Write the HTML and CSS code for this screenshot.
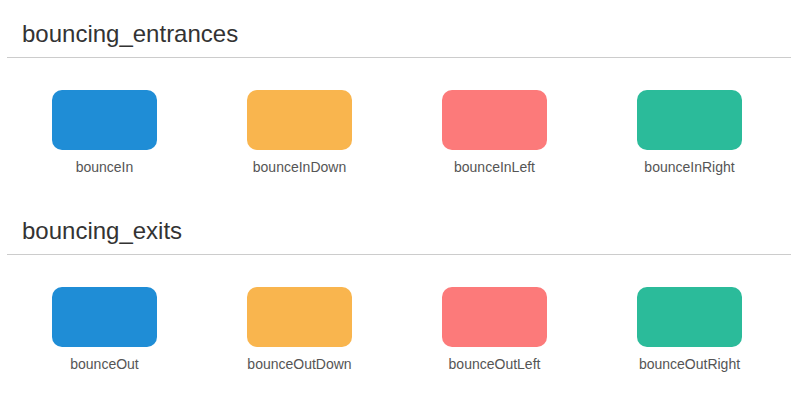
FILE: index.html
```html
<!DOCTYPE html>
<html lang="en">
<head>
    <meta charset="UTF-8">
    <title>bouncing</title>
    <link rel="stylesheet" href="styles.css">
</head>
<body>
    <div class="section">
        <h2 class="section-title">bouncing_entrances</h2>
        <div class="demo-grid">
            <div class="demo-item">
                <div class="demo-box blue"></div>
                <div class="demo-name">bounceIn</div>
            </div>
            <div class="demo-item">
                <div class="demo-box orange"></div>
                <div class="demo-name">bounceInDown</div>
            </div>
            <div class="demo-item">
                <div class="demo-box red"></div>
                <div class="demo-name">bounceInLeft</div>
            </div>
            <div class="demo-item">
                <div class="demo-box green"></div>
                <div class="demo-name">bounceInRight</div>
            </div>
        </div>
    </div>

    <div class="section">
        <h2 class="section-title">bouncing_exits</h2>
        <div class="demo-grid">
            <div class="demo-item">
                <div class="demo-box blue"></div>
                <div class="demo-name">bounceOut</div>
            </div>
            <div class="demo-item">
                <div class="demo-box orange"></div>
                <div class="demo-name">bounceOutDown</div>
            </div>
            <div class="demo-item">
                <div class="demo-box red"></div>
                <div class="demo-name">bounceOutLeft</div>
            </div>
            <div class="demo-item">
                <div class="demo-box green"></div>
                <div class="demo-name">bounceOutRight</div>
            </div>
        </div>
    </div>
</body>
</html>
```

FILE: styles.css
```css
* {
    margin: 0;
    padding: 0;
    box-sizing: border-box;
}

body {
    font-family: 'Liberation Sans', Arial, sans-serif;
    background: #fff;
    color: #333;
}

.section {
    padding: 21px 0 0 7px;
    margin-bottom: 20px;
}

.section-title {
    padding: 0 15px 10px;
    font-size: 24px;
    font-weight: normal;
    line-height: 26px;
    color: #333;
    border-bottom: 1px solid #ccc;
}

.demo-grid {
    display: grid;
    grid-template-columns: repeat(4, 195px);
    padding-top: 32px;
}

.demo-item {
    display: flex;
    flex-direction: column;
    align-items: center;
}

.demo-box {
    width: 105px;
    height: 60px;
    border-radius: 10px;
}

.demo-name {
    margin-top: 7px;
    font-size: 14px;
    line-height: 20px;
    color: #555;
}

.blue { background: #1f8dd6; }
.orange { background: #f9b54e; }
.red { background: #fc7a7a; }
.green { background: #2bbb9a; }
```
